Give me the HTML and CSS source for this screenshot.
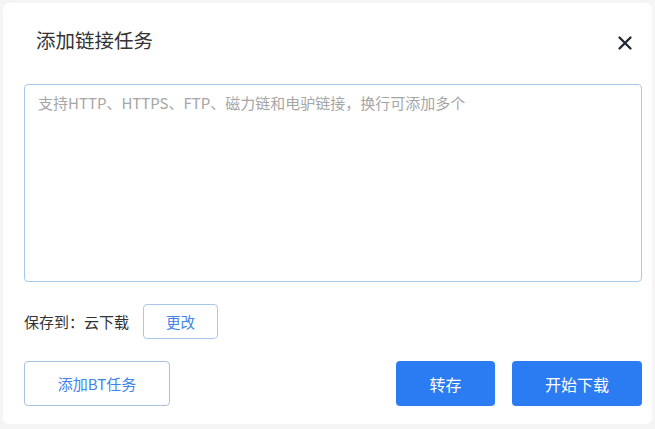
FILE: index.html
```html
<!DOCTYPE html>
<html lang="zh-CN">
<head>
    <meta charset="UTF-8">
    <meta name="viewport" content="width=device-width, initial-scale=1.0">
    <title>添加链接任务</title>
    <link rel="stylesheet" href="styles.css">
</head>
<body>
    <div class="dialog">
        <div class="dialog-header">
            <h2 class="dialog-title">添加链接任务</h2>
            <button class="close-btn" aria-label="关闭">
                <svg width="16" height="16" viewBox="0 0 16 16">
                    <path d="M2.5 2.5 L13.5 13.5 M13.5 2.5 L2.5 13.5" stroke="#1f2633" stroke-width="2.3" stroke-linecap="round"/>
                </svg>
            </button>
        </div>
        <textarea class="link-input" placeholder="支持HTTP、HTTPS、FTP、磁力链和电驴链接，换行可添加多个"></textarea>
        <div class="save-row">
            <span class="save-label">保存到：云下载</span>
            <button class="btn btn-small">更改</button>
        </div>
        <div class="actions">
            <button class="btn btn-outline">添加BT任务</button>
            <div class="actions-right">
                <button class="btn btn-primary btn-save">转存</button>
                <button class="btn btn-primary btn-start">开始下载</button>
            </div>
        </div>
    </div>
</body>
</html>
```

FILE: styles.css
```css
body {
    margin: 0;
    background-color: #f5f5f6;
    font-family: "Noto Sans CJK SC", "Noto Sans", sans-serif;
    padding: 3px;
}
.dialog {
    background: #fff;
    border-radius: 6px;
    width: 649px;
    height: 421px;
    box-sizing: border-box;
    padding: 0 10px 0 21px;
}
.dialog-header {
    display: flex;
    justify-content: space-between;
    align-items: center;
    height: 80px;
    padding: 0 9px 0 12px;
}
.dialog-title {
    margin: 0;
    font-size: 19.5px;
    font-weight: normal;
    color: #333;
    position: relative;
    top: -4px;
}
.close-btn {
    background: none;
    border: none;
    padding: 0;
    cursor: pointer;
    display: flex;
}
.link-input {
    display: block;
    width: 618px;
    height: 198px;
    margin: 1px 0 0;
    box-sizing: border-box;
    border: 1.5px solid #a9c6ee;
    border-radius: 4px;
    padding: 7px 13px;
    font-family: inherit;
    font-size: 15px;
    resize: none;
    outline: none;
}
.link-input::placeholder {
    color: #a6a6a6;
}
.save-row {
    display: flex;
    align-items: center;
    gap: 14px;
    margin-top: 22px;
}
.save-label {
    font-size: 15px;
    color: #333;
}
.btn {
    font-family: inherit;
    border-radius: 4px;
    cursor: pointer;
    box-sizing: border-box;
}
.btn-small {
    width: 75px;
    height: 35px;
    background: #fff;
    border: 1.5px solid #a9c6ee;
    color: #3f82ea;
    font-size: 14.5px;
}
.actions {
    display: flex;
    justify-content: space-between;
    margin-top: 22px;
}
.actions-right {
    display: flex;
    gap: 17px;
}
.btn-outline {
    width: 146px;
    height: 45px;
    background: #fff;
    border: 1.5px solid #a9c0de;
    color: #3f82ea;
    font-size: 15px;
}
.btn-primary {
    height: 45px;
    border: none;
    background-color: #2b7bf3;
    color: #fff;
    font-size: 16px;
}
.btn-save {
    width: 99px;
}
.btn-start {
    width: 130px;
}
```
